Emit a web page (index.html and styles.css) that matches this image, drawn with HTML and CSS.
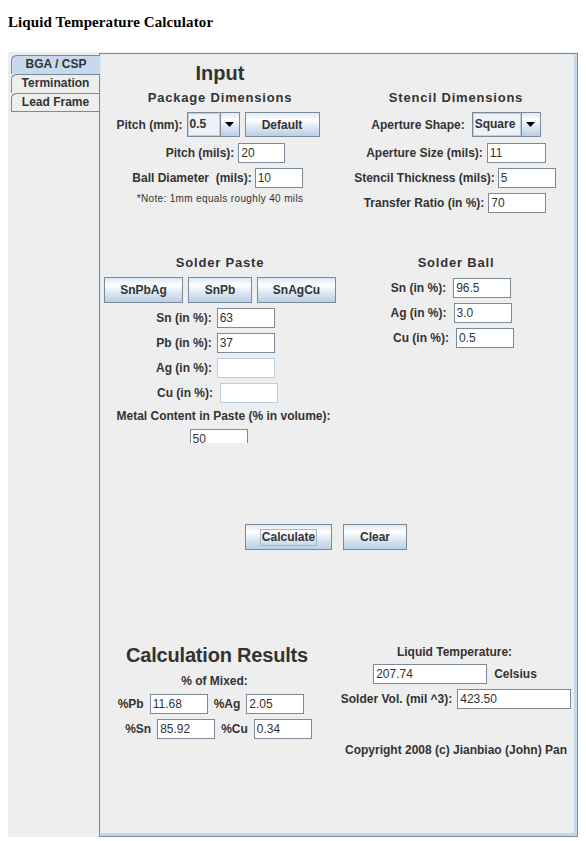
FILE: index.html
```html
<!DOCTYPE html>
<html>
<head>
<meta charset="utf-8">
<title>Liquid Temperature Calculator</title>
<link rel="stylesheet" href="styles.css">
</head>
<body>
<div class="title">Liquid Temperature Calculator</div>
<div class="applet">
  <div class="tabs">
    <div class="tab active">BGA / CSP</div>
    <div class="tab">Termination</div>
    <div class="tab last">Lead Frame</div>
  </div>
  <div class="panel">
    <div class="grid top">
      <div class="col">
        <div class="h1 mt7">Input</div>
        <div class="h2 mt5">Package Dimensions</div>
        <div class="row h25 mt6 pr4">
          <span class="lbl">Pitch (mm):</span>
          <div class="combo w53"><span class="combo-txt">0.5</span><span class="combo-btn"><svg width="9" height="5" viewBox="0 0 9 5"><path d="M0 0H9L4.5 5Z" fill="#000"/></svg></span></div>
          <button class="btn w75 h25 ml1">Default</button>
        </div>
        <div class="row mt6 pl11">
          <span class="lbl">Pitch (mils):</span>
          <input class="fld w47" value="20">
        </div>
        <div class="row mt5 g3 pr5">
          <span class="lbl">Ball Diameter&nbsp; (mils):</span>
          <input class="fld w48" value="10">
        </div>
        <div class="note mt5">*Note: 1mm equals roughly 40 mils</div>
      </div>
      <div class="col">
        <div class="h2 mt36">Stencil Dimensions</div>
        <div class="row h25 mt6 g7">
          <span class="lbl">Aperture Shape:</span>
          <div class="combo w69"><span class="combo-txt">Square</span><span class="combo-btn"><svg width="9" height="5" viewBox="0 0 9 5"><path d="M0 0H9L4.5 5Z" fill="#000"/></svg></span></div>
        </div>
        <div class="row mt6">
          <span class="lbl">Aperture Size (mils):</span>
          <input class="fld w59" value="11">
        </div>
        <div class="row mt5 g3 pr2">
          <span class="lbl">Stencil Thickness (mils):</span>
          <input class="fld w58" value="5">
        </div>
        <div class="row mt5 pr2">
          <span class="lbl">Transfer Ratio (in %):</span>
          <input class="fld w58" value="70">
        </div>
      </div>
    </div>

    <div class="grid mid">
      <div class="col">
        <div class="h2">Solder Paste</div>
        <div class="row h26 mt6 g5">
          <button class="btn w79 h26">SnPbAg</button>
          <button class="btn w64 h26">SnPb</button>
          <button class="btn w79 h26">SnAgCu</button>
        </div>
        <div class="row mt5 g5 pr9">
          <span class="lbl">Sn (in %):</span>
          <input class="fld w58" value="63">
        </div>
        <div class="row mt5 g5 pr9">
          <span class="lbl">Pb (in %):</span>
          <input class="fld w58" value="37">
        </div>
        <div class="row mt5 g5 pr9">
          <span class="lbl">Ag (in %):</span>
          <input class="fld w58 off" value="">
        </div>
        <div class="row mt5 g7 pr5">
          <span class="lbl">Cu (in %):</span>
          <input class="fld w58 off" value="">
        </div>
        <div class="row lh16 mt5 pl7">
          <span class="lbl">Metal Content in Paste (% in volume):</span>
        </div>
        <div class="row clip mt5 pr3">
          <input class="fld w58" value="50">
        </div>
      </div>
      <div class="col">
        <div class="h2">Solder Ball</div>
        <div class="row mt7 g7 pr10">
          <span class="lbl">Sn (in %):</span>
          <input class="fld w58" value="96.5">
        </div>
        <div class="row mt5 g7 pr10">
          <span class="lbl">Ag (in %):</span>
          <input class="fld w58" value="3.0">
        </div>
        <div class="row mt5 g7 pr5">
          <span class="lbl">Cu (in %):</span>
          <input class="fld w58" value="0.5">
        </div>
      </div>
    </div>

    <div class="row actions h26 g11 pr25">
      <button class="btn w87 h26"><span class="focus">Calculate</span></button>
      <button class="btn w64 h26">Clear</button>
    </div>

    <div class="grid results">
      <div class="col">
        <div class="h1 big pr6">Calculation Results</div>
        <div class="row lh16 mt6 pr11"><span class="lbl">% of Mixed:</span></div>
        <div class="row mt5 g6 pr18">
          <span class="lbl">%Pb</span>
          <input class="fld w58" value="11.68">
          <span class="lbl">%Ag</span>
          <input class="fld w58" value="2.05">
        </div>
        <div class="row mt5 g6 pr3">
          <span class="lbl">%Sn</span>
          <input class="fld w58" value="85.92">
          <span class="lbl">%Cu</span>
          <input class="fld w58" value="0.34">
        </div>
      </div>
      <div class="col">
        <div class="row lh16 mt1 pr3"><span class="lbl">Liquid Temperature:</span></div>
        <div class="row mt4 g7 pr2">
          <input class="fld w114" value="207.74">
          <span class="lbl">Celsius</span>
        </div>
        <div class="row mt5 g5">
          <span class="lbl">Solder Vol. (mil ^3):</span>
          <input class="fld w114" value="423.50">
        </div>
        <div class="row lh16 mt33"><span class="lbl">Copyright 2008 (c) Jianbiao (John) Pan</span></div>
      </div>
    </div>
  </div>
</div>
</body>
</html>
```

FILE: styles.css
```css
html, body {
  margin: 0;
  padding: 0;
  background: #ffffff;
}

body {
  font-family: "Liberation Sans", Arial, sans-serif;
  color: #333333;
}

.title {
  box-sizing: border-box;
  height: 52px;
  padding: 14px 8px 0;
  font-family: "Liberation Serif", "Times New Roman", serif;
  font-weight: bold;
  font-size: 15px;
  letter-spacing: 0.1px;
  line-height: 16px;
  color: #000;
}

.applet {
  display: flex;
  margin-left: 8px;
  width: 570px;
  height: 785px;
  background: #eeeeee;
}

.tabs {
  width: 91px;
  padding: 3px 0 0 3px;
  box-sizing: border-box;
  display: flex;
  flex-direction: column;
  z-index: 2;
}

.tab {
  box-sizing: border-box;
  height: 19px;
  border-top: 1px solid #7a8a99;
  border-left: 1px solid #7a8a99;
  border-top-left-radius: 6px 5px;
  font-weight: bold;
  font-size: 12px;
  line-height: 17px;
  text-align: center;
  color: #333;
  background: #eeeeee;
}

.tab.active {
  background: #c6d9ee;
  margin-right: -1px;
}

.tab.last {
  border-bottom: 1px solid #7a8a99;
}

.panel {
  flex: 1;
  box-sizing: border-box;
  margin-top: 1px;
  height: 784px;
  border: 1px solid #7a8a99;
  box-shadow: inset 1px 1px 0 #dde8f3, inset -3px -3px 0 #c3d6ea;
  display: flex;
  flex-direction: column;
}

.grid {
  display: grid;
  grid-template-columns: 240px 232px;
}

.col {
  display: flex;
  flex-direction: column;
}

.mid { margin-top: 42px; }
.actions { margin-top: 81px; }
.results { margin-top: 93px; }

.h1 {
  font-weight: bold;
  font-size: 20px;
  line-height: 24px;
  text-align: center;
}

.h1.big { letter-spacing: -0.2px; }

.h2 {
  font-weight: bold;
  font-size: 13px;
  letter-spacing: 0.8px;
  line-height: 16px;
  text-align: center;
}

.note {
  font-size: 10px;
  line-height: 12px;
  text-align: center;
  letter-spacing: 0.35px;
}

.row {
  display: flex;
  justify-content: center;
  align-items: center;
  gap: 4px;
  height: 20px;
}

.lbl {
  font-weight: bold;
  font-size: 12px;
  white-space: nowrap;
}

.fld {
  box-sizing: border-box;
  height: 20px;
  margin: 0;
  padding: 0 2px;
  border: 1px solid #7a8a99;
  border-radius: 0;
  background: #fff;
  font-family: "Liberation Sans", Arial, sans-serif;
  font-size: 12px;
  color: #333;
  outline: none;
}

.fld.off { border-color: #b8cfe5; }

.clip {
  height: 14px;
  overflow: hidden;
  align-items: flex-start;
}

.btn {
  box-sizing: border-box;
  margin: 0;
  padding: 0;
  border: 1px solid #7a8a99;
  border-radius: 0;
  background: linear-gradient(#dde8f3 0%, #ffffff 30%, #dde8f3 60%, #b8cfe5 100%);
  font-family: "Liberation Sans", Arial, sans-serif;
  font-weight: bold;
  font-size: 12px;
  color: #333;
  display: flex;
  align-items: center;
  justify-content: center;
}

.focus {
  border: 1px solid #a3b8cc;
  padding: 0 1px;
  line-height: 15px;
}

.combo {
  box-sizing: border-box;
  height: 25px;
  display: flex;
  border: 1px solid #7a8a99;
  background: #fff;
}

.combo-txt {
  flex: 1;
  box-sizing: border-box;
  border: 1px solid #b8cfe5;
  background: #eef1f5;
  font-weight: bold;
  font-size: 12px;
  line-height: 21px;
  padding-left: 1px;
}

.combo-btn {
  width: 19px;
  box-sizing: border-box;
  border-left: 1px solid #7a8a99;
  background: linear-gradient(#dde8f3 0%, #ffffff 30%, #dde8f3 60%, #b8cfe5 100%);
  display: flex;
  align-items: center;
  justify-content: center;
}

.w47 { width: 47px; }
.w48 { width: 48px; }
.w53 { width: 53px; }
.w58 { width: 58px; }
.w59 { width: 59px; }
.w64 { width: 64px; }
.w69 { width: 69px; }
.w75 { width: 75px; }
.w79 { width: 79px; }
.w87 { width: 87px; }
.w114 { width: 114px; }

.h25 { height: 25px; }
.h26 { height: 26px; }
.lh16 { height: 16px; line-height: 16px; }

.mt1 { margin-top: 1px; }
.mt4 { margin-top: 4px; }
.mt5 { margin-top: 5px; }
.mt6 { margin-top: 6px; }
.mt7 { margin-top: 7px; }
.mt33 { margin-top: 33px; }
.mt36 { margin-top: 36px; }
.ml1 { margin-left: 1px; }

.g3 { gap: 3px; }
.g5 { gap: 5px; }
.g6 { gap: 6px; }
.g7 { gap: 7px; }
.g11 { gap: 11px; }

.pl7 { padding-left: 7px; }
.pl11 { padding-left: 11px; }
.pr2 { padding-right: 2px; }
.pr3 { padding-right: 3px; }
.pr4 { padding-right: 4px; }
.pr5 { padding-right: 5px; }
.pr6 { padding-right: 6px; }
.pr9 { padding-right: 9px; }
.pr10 { padding-right: 10px; }
.pr11 { padding-right: 11px; }
.pr18 { padding-right: 18px; }
.pr25 { padding-right: 25px; }
```
